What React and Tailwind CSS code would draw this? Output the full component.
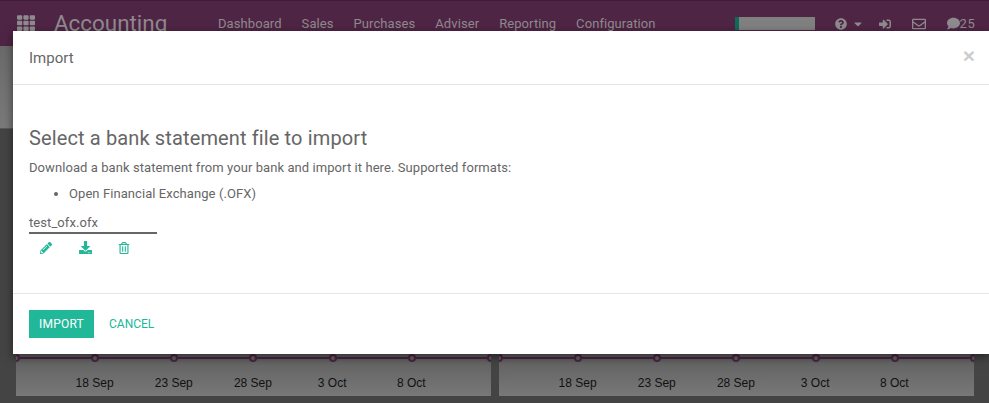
import { FaDownload, FaPencilAlt, FaQuestionCircle, FaSignInAlt, FaRegEnvelope, FaComment, FaCaretDown, FaTh, FaRegTrashAlt } from 'react-icons/fa';

const NAV_ITEMS = ['Dashboard', 'Sales', 'Purchases', 'Adviser', 'Reporting', 'Configuration'];
const TICKS = ['18 Sep', '23 Sep', '28 Sep', '3 Oct', '8 Oct'];

function ChartCard() {
  return (
    <div className="relative w-[475px] h-[42px] overflow-hidden bg-gradient-to-b from-[#5f5f5f] to-[#787878]">
      <div className="absolute left-[-4px] right-[-4px] top-0 flex items-center justify-between">
        <div className="absolute left-0 right-0 top-[3px] h-[2px] bg-[#4f2545]" />
        {[0, 1, 2, 3, 4, 5, 6].map((i) => (
          <span key={i} className="relative w-[8px] h-[8px] rounded-full border-2 border-[#4f2545] bg-[#666]" />
        ))}
      </div>
      <div className="absolute left-[39px] top-[22px] flex font-['Liberation_Sans',sans-serif] text-[12px] leading-[14px] text-[#111]">
        {TICKS.map((t) => <span key={t} className="w-[79.2px] text-center">{t}</span>)}
      </div>
    </div>
  );
}

export default function App() {
  return (
    <div className="relative w-[989px] h-[403px] overflow-hidden bg-[#444] font-['Roboto',sans-serif]">
      {/* dimmed page */}
      <header className="h-[46px] bg-[#4f2545] border-t border-[#3f1c37] flex items-center text-[#8f8a8e]">
        <FaTh size={18} className="ml-[17px] mt-[-1px]" />
        <span className="ml-[19px] text-[22.4px] leading-none w-[164px]">Accounting</span>
        <nav className="flex gap-[20px] text-[13px] tracking-[0.08px]">
          {NAV_ITEMS.map((n) => <span key={n}>{n}</span>)}
        </nav>
        <div className="ml-[79px] w-[80px] h-[13px] flex bg-[#808080]">
          <span className="w-[4px] bg-[#0f6b58]" />
        </div>
        <FaQuestionCircle size={12} className="ml-[20px]" />
        <FaCaretDown size={12} className="ml-[5px]" />
        <FaSignInAlt size={12} className="ml-[15px]" />
        <FaRegEnvelope size={14} className="ml-[21px]" />
        <FaComment size={13} className="ml-[21px]" />
        <span className="text-[13px] tracking-[0.5px]">25</span>
      </header>
      <div className="h-[83px] bg-gradient-to-b from-[#6a6a6a] to-[#7a7a7a] border-b border-[#5a5a5a]" />
      <main className="flex gap-[8px] pl-[16px] pt-[225px]">
        <ChartCard />
        <ChartCard />
      </main>

      {/* modal */}
      <div className="absolute left-[13px] top-[31px] w-[976px] h-[323px] bg-white flex flex-col text-[#666] shadow-[0_3px_9px_rgba(0,0,0,0.5)]">
        <div className="h-[54px] border-b border-[#e5e5e5] flex items-center justify-between pl-[16px] pr-[14px]">
          <span className="text-[15px] mt-[1px]">Import</span>
          <span className="font-['Liberation_Sans',sans-serif] text-[#cdcdcd] text-[21px] font-bold leading-none mb-[5px]">×</span>
        </div>
        <div className="h-[209px] border-b border-[#e5e5e5] pl-[16px] pt-[41px]">
          <h3 className="text-[20px] leading-[24px] tracking-[0.13px]">Select a bank statement file to import</h3>
          <p className="text-[13px] leading-[18px] mt-[9px] tracking-[0.075px]">Download a bank statement from your bank and import it here. Supported formats:</p>
          <ul className="list-disc pl-[40px] mt-[8px] text-[13px] leading-[18px] tracking-[0.075px]">
            <li>Open Financial Exchange (.OFX)</li>
          </ul>
          <div className="w-[128px] mt-[11px] border-b-2 border-[#666] text-[13px] leading-[18px] h-[20px] tracking-[0.075px]">test_ofx.ofx</div>
          <div className="flex items-center text-[#21b799] mt-[7px] pl-[11px]">
            <FaPencilAlt size={12} />
            <FaDownload size={13} className="ml-[27px]" />
            <FaRegTrashAlt size={12} className="ml-[26px]" />
          </div>
        </div>
        <div className="flex items-center pl-[16px] pt-[16px]">
          <button className="h-[28px] w-[65px] bg-[#21b799] text-white text-[12px] tracking-[0.2px]">IMPORT</button>
          <button className="ml-[15px] text-[#21b799] text-[12px]">CANCEL</button>
        </div>
      </div>
    </div>
  );
}
